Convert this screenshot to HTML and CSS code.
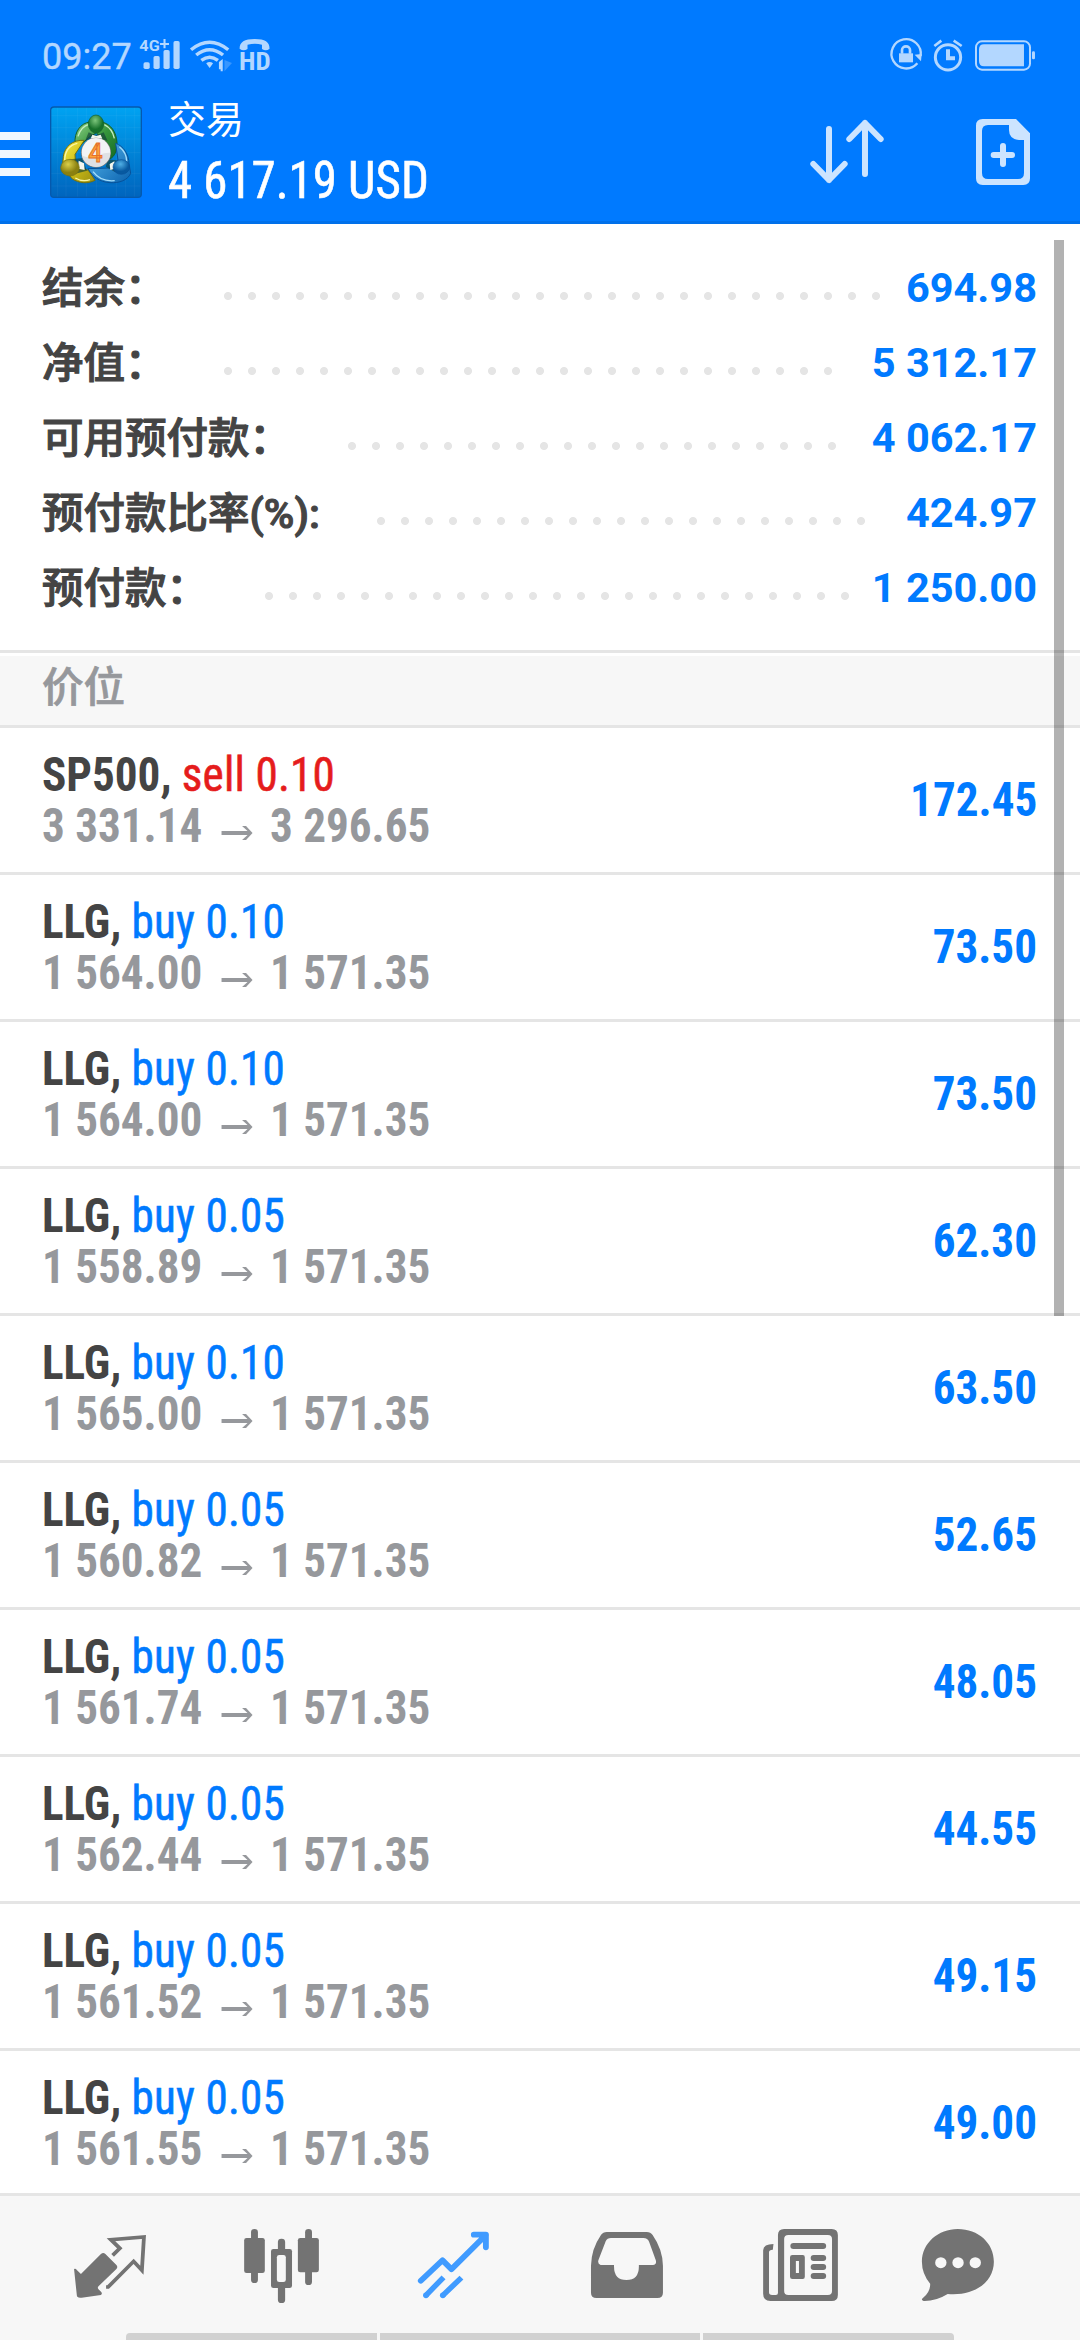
FILE: index.html
```html
<!DOCTYPE html>
<html lang="zh-CN">
<head>
<meta charset="utf-8">
<title>交易</title>
<link rel="stylesheet" href="styles.css">
</head>
<body>
<div class="screen">
  <header class="header">
    <div class="status">
      <span class="clock">09:27</span>
      <svg class="status-left" viewBox="399 105 392 121" preserveAspectRatio="none">
        <g fill="#b3d7ff">
          <text x="403" y="152" font-size="44" font-weight="700" textLength="59" lengthAdjust="spacingAndGlyphs">4G</text>
          <path d="M473 117h6v12h10v6h-10v10h-6v-10h-10v-6h10z"/>
          <rect x="415" y="187" width="18" height="20" rx="5"/><rect x="444" y="168" width="18" height="39" rx="5"/>
          <rect x="473" y="150" width="18" height="57" rx="5"/><rect x="502" y="123" width="18" height="84" rx="5"/>
          <path d="M597 190q10-8 20 0l-10 14z"/>
          <path d="M634 208v-22l11-9v37h-6v-6z"/><path d="M650 180l22 9-22 25z" opacity=".3"/>
          <path d="M694 146c0-20 14-29 44-29s43 9 43 29q-10 9-22 1v-13q-20-5-42 0v13q-12 8-23-1z"/>
          <text class="hd" x="692" y="210" font-size="76" font-weight="700" textLength="92" lengthAdjust="spacingAndGlyphs">HD</text>
        </g>
        <g fill="none" stroke="#b3d7ff" stroke-width="10"><path d="M553 149q54-45 108 0M568 165q39-32 78 0M583 181q24-19 48 0"/></g>
      </svg>
      <svg class="status-right" viewBox="324 110 450 110">
        <g fill="none" stroke="#b3d7ff" stroke-width="7">
          <path d="M412 189a44 44 0 1 1 10-22" /><path d="M366 160v-11a12 11 0 0 1 24 0v11" stroke-width="8"/>
          <circle cx="504" cy="171" r="38" stroke-width="9"/>
          <path d="M463 137l21-16M545 137l-24-16" stroke-width="8"/><path d="M504 147v27h21" stroke-width="12"/>
          <rect x="588" y="123" width="162" height="85" rx="18" stroke-width="6"/>
        </g>
        <g fill="#b3d7ff"><rect x="357" y="159" width="42" height="27"/><path d="M404 163l21-2-2 22z"/>
        <path d="M732 132H612q-15 0-15 16v34q0 16 15 16h120z"/><rect x="756" y="153" width="9" height="24" rx="4"/></g>
      </svg>
    </div>
    <div class="appbar">
      <svg class="menu" viewBox="0 0 30 44"><path d="M0 0h30v8H0zM0 18h30v8H0zM0 36h30v8H0z" fill="#f0f7ff"/></svg>
      <svg class="logo" viewBox="29 33 276 276">
        <defs>
          <linearGradient id="bg" x2="0" y2="1"><stop stop-color="#00a3f2"/><stop offset="1" stop-color="#0064bd"/></linearGradient>
          <linearGradient id="gr" x2="1" y2="1"><stop stop-color="#8fd089"/><stop offset=".5" stop-color="#36953b"/><stop offset="1" stop-color="#146b25"/></linearGradient>
          <linearGradient id="ye" x2="1" y2="1"><stop stop-color="#f8ed48"/><stop offset=".5" stop-color="#cdbd16"/><stop offset="1" stop-color="#9a8f12"/></linearGradient>
          <linearGradient id="bl" x2="1" y2="1"><stop stop-color="#58b9ee"/><stop offset="1" stop-color="#0b62ae"/></linearGradient>
          <radialGradient id="hg" cx=".45" cy=".3"><stop stop-color="#7cc67b"/><stop offset="1" stop-color="#17702a"/></radialGradient>
          <radialGradient id="hy" cx=".4" cy=".3"><stop stop-color="#dbd04a"/><stop offset="1" stop-color="#8a8010"/></radialGradient>
          <radialGradient id="hb" cx=".45" cy=".3"><stop stop-color="#50b0e6"/><stop offset="1" stop-color="#0759a0"/></radialGradient>
        </defs>
        <rect x="31" y="36" width="272" height="271" rx="10" fill="url(#bg)" stroke="#0559ad" stroke-width="4"/>
        <path d="M52 38v267M77 38v267M112 38v267M138 38v267M168 38v267M228 38v267M256 38v267M282 38v267M33 62h268M33 98h268M33 132h268M33 173h268M33 235h268M33 273h268" stroke="#fff" stroke-opacity=".07" stroke-width="2"/>
        <path d="M104 145c-2-34 16-60 44-64h36c28 6 44 30 46 62 1 24-8 42-20 48l-18-50-24-28-22 14-24 22z" fill="url(#gr)" stroke="#15602a" stroke-width="3"/>
        <path d="M113 124q8-28 32-36M222 130q-6-29-30-41" fill="none" stroke="#c6edbf" stroke-width="4"/>
        <path d="M132 136c-35-2-59 18-63 48l-3 32 30 36c20 12 44 16 68 4l-20-30-38-12-2-36z" fill="url(#ye)" stroke="#75700d" stroke-width="3"/>
        <path d="M73 195q2-42 38-50M105 249q22 13 44 5" fill="none" stroke="#fcf6a4" stroke-width="4"/>
        <path d="M226 145c24 8 40 34 40 62l5 28c-8 20-34 30-62 28-32-2-52-18-66-42l66-2 24-24z" fill="url(#bl)" stroke="#075199" stroke-width="3"/>
        <path d="M237 155q22 18 22 44M158 230q23 31 65 27" fill="none" stroke="#a4ddfa" stroke-width="4"/>
        <path d="M98 202l-12-9 39-3 7 18 8 19-38 10zM248 199l-45-6-7 22 28 16 26-4zM145 112q22 14 45 0l12 26-34-12-34 12z" fill="#123f38" opacity=".65"/>
        <path d="M115 197l16 8 2 20-20-4zM222 199l-14 8 2 18 17-5zM156 119l12 4 13-4 5 12h-35z" fill="#f4f7ee"/>
        <ellipse cx="167" cy="87" rx="23" ry="27" fill="url(#hg)" stroke="#14602a" stroke-width="2"/>
        <ellipse cx="89" cy="218" rx="28" ry="25" fill="url(#hy)" stroke="#79720f" stroke-width="2"/>
        <ellipse cx="243" cy="216" rx="25" ry="22" fill="url(#hb)" stroke="#075199" stroke-width="2"/>
        <circle cx="167" cy="173" r="45" fill="#777"/><circle cx="167" cy="172" r="43" fill="#f2f3f5"/>
        <path d="M125 182q30 10 52-2 15-8 33-7a43 43 0 0 1-85 9z" fill="#dfe1e4"/>
        <text x="144" y="201" font-size="80" font-weight="500" fill="#ffa53c" stroke="#e5702b" stroke-width="3" textLength="43" lengthAdjust="spacingAndGlyphs">4</text>
      </svg>
      <div class="heading">
        <div class="title">交易</div>
        <div class="sum cond">4 617.19 USD</div>
      </div>
      <svg class="sort" viewBox="84 354 230 201"><g fill="none" stroke="#cce4ff" stroke-width="18" stroke-linecap="round" stroke-linejoin="round"><path d="M144 387v153M97 492l47 48 47-48M252 522V369M205 417l47-48 47 48"/></g></svg>
      <svg class="add" viewBox="582 354 168 204"><path fill="#cce4ff" fill-rule="evenodd" d="M605 357h100l42 43v135q0 20-20 20H605q-20 0-20-20V377q0-20 20-20zM684 375h-63q-18 0-18 18v126q0 18 18 18h90q18 0 18-18v-99h-15q-30-3-30-30z"/><path d="M666 438v54M638 465h55" stroke="#cce4ff" stroke-width="18" stroke-linecap="round"/></svg>
    </div>
  </header>

  <main class="content">
    <section class="summary">
      <div class="line"><span>结余：</span><i class="dots" style="--n:28"></i><b>694.98</b></div>
      <div class="line"><span>净值：</span><i class="dots" style="--n:26"></i><b>5 312.17</b></div>
      <div class="line"><span>可用预付款：</span><i class="dots" style="--n:21"></i><b>4 062.17</b></div>
      <div class="line"><span>预付款比率(%):</span><i class="dots" style="--n:21"></i><b>424.97</b></div>
      <div class="line"><span>预付款：</span><i class="dots" style="--n:25"></i><b>1 250.00</b></div>
    </section>
    <h2 class="section">价位</h2>
    <ul class="positions" id="positions"></ul>
    <div class="scrollbar"></div>
  </main>

  <nav class="nav">
    <svg viewBox="174.2 138 290.4 240" preserveAspectRatio="none"><g fill="#737373"><path d="M215 267q5-2 8 3l12 12 58-60q7-6 13 0l32 33q5 6 0 12l-52 52q-4 4 0 9l8 8q4 6-1 9l-56 8q-14 2-14-8z"/></g><path fill="none" stroke="#737373" stroke-width="11" d="M327 226l21-21-26-26 96-8-6 100-24-27-74 77h-6"/></svg>
    <svg viewBox="673.7 138 290.4 240" preserveAspectRatio="none"><g fill="#737373"><rect x="729" y="147" width="20" height="162" rx="10"/><rect x="709" y="174" width="60" height="105" rx="7"/><rect x="886" y="147" width="20" height="168" rx="10"/><rect x="865" y="174" width="61" height="103" rx="7"/><rect x="807" y="176" width="21" height="50" rx="10"/><rect x="807" y="300" width="21" height="69" rx="10"/><rect x="787" y="207" width="61" height="117" rx="7"/></g><rect x="804" y="225" width="26" height="81" rx="7" fill="#f7f7f7"/></svg>
    <svg viewBox="1173.2 138 290.4 240" preserveAspectRatio="none"><g fill="none" stroke="#409bff" stroke-width="16" stroke-linejoin="round"><path stroke-linecap="round" d="M1222 302l63-61 26 27 100-103M1376 164h35v38" stroke-width="17"/><path d="M1237 346l51-54M1286 346l54-53"/></g><circle cx="1237" cy="346" r="8.500" fill="#409bff"/><circle cx="1286" cy="346" r="8.500" fill="#409bff"/></svg>
    <svg viewBox="104.500 138 290.4 240" preserveAspectRatio="none"><path fill="#737373" fill-rule="evenodd" d="M194 156h116q11 0 17 9 29 43 30 92v81q0 16-16 16H164q-16 0-16-16v-81q1-50 29-92 6-9 17-9zM206 174q-11 0-15 9l-21 56q-4 12 6 16h39q-2 45 36 45t36-45h41q12-2 8-15l-19-54q-4-12-17-12z"/></svg>
    <svg viewBox="604 138 290.4 240" preserveAspectRatio="none"><path fill="#737373" fill-rule="evenodd" d="M709 147h138q18 0 18 18v180q0 18-18 18H669q-21-1-21-22V211q1-19 30-19l-2 17q-11 0-11 8v120q0 8 9 8h11q6 0 6-6V165q0-18 18-18zM721 165q-12 0-12 12v156q0 12 12 12h115q12 0 12-12V177q0-12-12-12z"/><path fill="#737373" fill-rule="evenodd" d="M733 225h30q6 0 6 7v58q0 7-6 7h-30q-7 0-7-7v-58q0-7 7-7zM743 243v36h9v-36z"/><path stroke="#737373" stroke-width="18" stroke-linecap="round" d="M736 198h86M795 234h27M795 261h27M795 288h27"/></svg>
    <svg viewBox="1103.500 138 290.4 240" preserveAspectRatio="none"><path fill="#737373" d="M1213 147c60 0 105 42 105 98s-50 104-134 97q-35 22-70 21-9-3-2-9 22-18 21-43-24-30-24-66c0-56 48-98 104-98z"/><g fill="#f7f7f7"><circle cx="1164" cy="248" r="16.500"/><circle cx="1214" cy="248" r="16.500"/><circle cx="1264" cy="248" r="16.500"/></g></svg>
    <div class="gesture"><i></i><i></i><i></i></div>
  </nav>
</div>
<script src="app.js"></script>
</body>
</html>
```
FILE: styles.css
```css
* { box-sizing: border-box; }
body { margin: 0; background: #fff; font-family: "Roboto", "Noto Sans CJK SC", sans-serif; }
svg { display: block; flex: none; overflow: visible; }
.screen { width: 1080px; height: 2340px; display: flex; flex-direction: column; overflow: hidden; }

.header { height: 224px; flex: none; background: #007aff; border-bottom: 3px solid #0070ea; }
.status { height: 92px; padding: 20px 42px 0 42px; display: flex; align-items: center; color: #b3d7ff; }
.clock { width: 96px; font-size: 36px; line-height: 40px; margin-top: 2px; -webkit-text-stroke: .4px; }
.status-left { width: 135px; height: 40.33px; margin-top: -1px; }
.status-right { width: 150px; height: 36.67px; margin-left: auto; margin-top: -2px; }
.hd { font-stretch: 75%; }
.appbar { display: flex; height: 129px; align-items: flex-start; }
.menu { width: 30px; height: 44px; margin-top: 40px; }
.logo { width: 92px; height: 92px; margin: 14px 0 0 20px; }
.heading { flex: 1; margin-left: 26px; color: #fff; white-space: nowrap; }
.title { font-size: 38px; line-height: 48px; margin-top: 4px; }
.sum { font-size: 52px; line-height: 60px; margin-top: 7px; -webkit-text-stroke: .6px; }
.sort { width: 76.67px; height: 67px; margin: 26px 89px 0 0; }
.add { width: 56px; height: 68px; margin: 26px 49px 0 0; }

.cond { font-family: "Roboto", "Noto Sans CJK SC", sans-serif; font-stretch: 75%; transform: scaleX(.94); transform-origin: left; }

.content { flex: 1; min-height: 0; overflow: hidden; position: relative; }
.summary { height: 426px; padding: 26px 43px 0 42px; }
.line { height: 75px; display: flex; align-items: center; font-size: 41.5px; font-weight: 500; color: #444; white-space: nowrap; }
.line span { padding-bottom: 5px; -webkit-text-stroke: 1.1px; }
.line b { margin-left: auto; font-weight: 700; color: #007aff; }
.dots { width: calc(var(--n) * 24px); height: 8px; margin: 16px 0 0 57px; background: radial-gradient(circle at 4px 4px, #e5e5e5 3.6px, transparent 4.4px) 0 0 / 24px 8px; }
.section { height: 78px; margin: 0; padding-left: 42px; border: solid #e5e5e5; border-width: 3px 0; background: #f7f7f7; box-shadow: inset 0 3px #fff; font-size: 41.5px; line-height: 69px; font-weight: 500; -webkit-text-stroke: .7px; color: #96989c; }
.positions { margin: 0; padding: 0; list-style: none; }
.position { height: 147px; padding: 0 43px 0 42px; border-bottom: 3px solid #e5e5e5; display: flex; align-items: center; justify-content: space-between; font-size: 48px; line-height: 51px; white-space: nowrap; }
.symbol { color: #444; }
.symbol span { -webkit-text-stroke: .6px; letter-spacing: .2px; }
.position b { font-weight: 700; }
.buy { color: #007aff; }
.sell { color: #e51c1c; }
.prices { color: #96989c; font-weight: 700; display: flex; align-items: center; }
.prices svg { width: 33px; height: 14px; margin: 15px 19px 0 20px; }
.profit { color: #007aff; font-weight: 700; padding-bottom: 2px; transform-origin: right; }
.scrollbar { position: absolute; right: 16px; top: 16px; width: 10px; height: 1076px; background: rgba(0, 0, 0, .3); }

.nav { position: relative; height: 147px; flex: none; border-top: 3px solid #e5e5e5; background: #f7f7f7; display: flex; gap: 72px; padding: 30px 0 0 60px; }
.nav > svg { width: 100px; height: 80px; }
.gesture { position: absolute; left: 126px; bottom: 0; width: 828px; height: 7px; display: flex; gap: 3px; border-radius: 4px 4px 0 0; overflow: hidden; }
.gesture i { background: #d1d1d1; width: 251px; }
.gesture i:nth-child(2) { width: 320px; }
```
FILE: app.js
```js
const rows = [
  ["SP500", "sell", "0.10", "3 331.14", "3 296.65", "172.45"],
  ["LLG", "buy", "0.10", "1 564.00", "1 571.35", "73.50"],
  ["LLG", "buy", "0.10", "1 564.00", "1 571.35", "73.50"],
  ["LLG", "buy", "0.05", "1 558.89", "1 571.35", "62.30"],
  ["LLG", "buy", "0.10", "1 565.00", "1 571.35", "63.50"],
  ["LLG", "buy", "0.05", "1 560.82", "1 571.35", "52.65"],
  ["LLG", "buy", "0.05", "1 561.74", "1 571.35", "48.05"],
  ["LLG", "buy", "0.05", "1 562.44", "1 571.35", "44.55"],
  ["LLG", "buy", "0.05", "1 561.52", "1 571.35", "49.15"],
  ["LLG", "buy", "0.05", "1 561.55", "1 571.35", "49.00"],
];
const arrow = '<svg viewBox="0 0 31 14" preserveAspectRatio="none"><path d="M0 5h26L20.500 0h4L31 7l-6.500 7h-4L26 9H0z" fill="#96989c"/></svg>';
document.getElementById("positions").innerHTML = rows.map(([s, side, vol, from, to, profit]) => `
  <li class="position">
    <div class="cond">
      <div class="symbol"><b>${s},</b> <span class="${side}">${side} ${vol}</span></div>
      <div class="prices"><span>${from}</span>${arrow}<span>${to}</span></div>
    </div>
    <div class="profit cond">${profit}</div>
  </li>`).join("");
```
